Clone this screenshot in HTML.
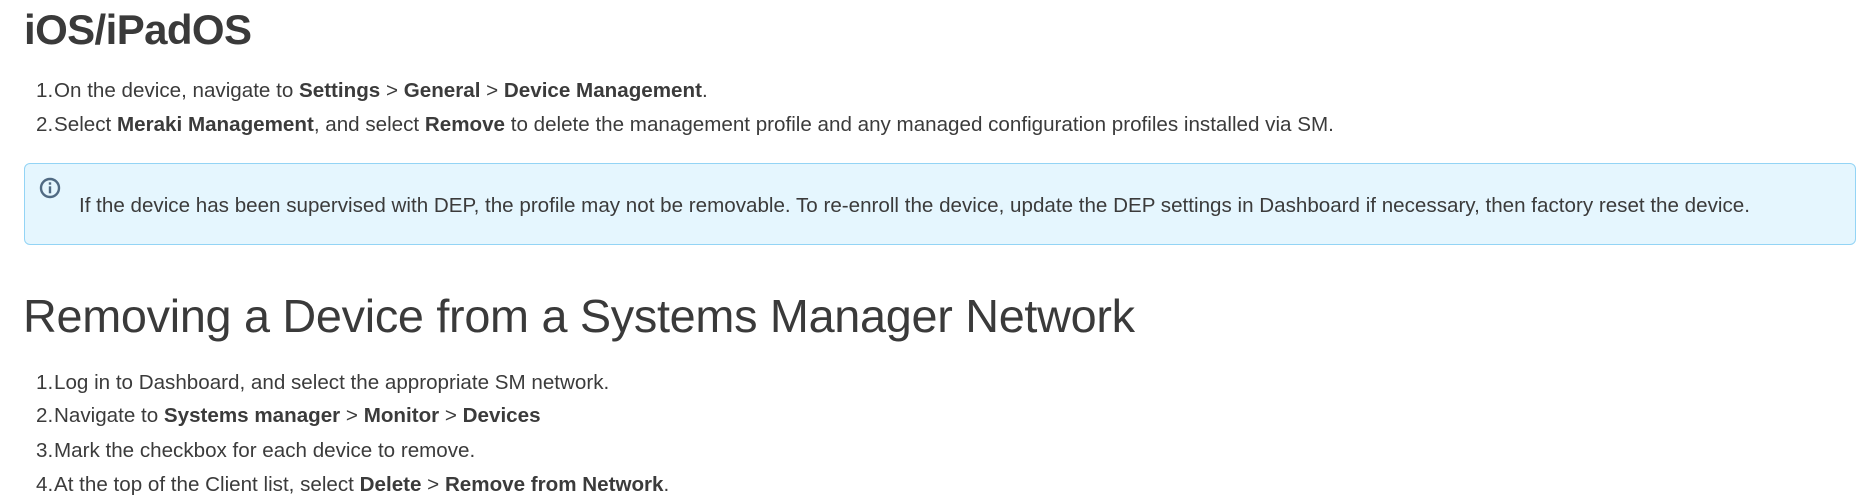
<!DOCTYPE html>
<html><head><style>
body{margin:0;width:1864px;height:502px;background:#fff;color:#3b3b3b;font-family:"Liberation Sans",sans-serif;position:relative;overflow:hidden}
.a{position:absolute;white-space:nowrap}
h1{position:absolute;left:24px;top:6px;margin:0;font-size:42px;font-weight:bold;color:#3a3a3a;letter-spacing:-0.6px}
h2{position:absolute;left:23px;top:289px;margin:0;font-size:46.8px;font-weight:normal;color:#3a3a3a;letter-spacing:-0.3px}
.li{position:absolute;left:36px;font-size:20.6px;white-space:nowrap;line-height:22px}
.li .n{display:inline-block;width:18px}
.box{position:absolute;left:24px;top:163px;width:1830px;height:80px;background:#e5f6fe;border:1px solid #93d4f5;border-radius:6px}
</style></head><body>
<h1>iOS/iPadOS</h1>
<div class="li" style="top:80px"><span class="n">1.</span>On the device, navigate to <b>Settings</b> &gt; <b>General</b> &gt; <b>Device Management</b>.</div>
<div class="li" style="top:114px"><span class="n">2.</span>Select <b>Meraki Management</b>, and select <b>Remove</b> to delete the management profile and any managed configuration profiles installed via SM.</div>
<div class="box"></div>
<svg class="a" style="left:39px;top:177px" width="22" height="22" viewBox="0 0 22 22"><circle cx="11" cy="11" r="9" fill="none" stroke="#506a83" stroke-width="2.4"/><rect x="9.8" y="9.3" width="2.4" height="7" fill="#506a83"/><rect x="9.8" y="5.3" width="2.4" height="2.4" fill="#506a83"/></svg>
<div class="li" style="left:79px;top:195px">If the device has been supervised with DEP, the profile may not be removable. To re-enroll the device, update the DEP settings in Dashboard if necessary, then factory reset the device.</div>
<h2>Removing a Device from a Systems Manager Network</h2>
<div class="li" style="top:372px"><span class="n">1.</span>Log in to Dashboard, and select the appropriate SM network.</div>
<div class="li" style="top:405px"><span class="n">2.</span>Navigate to <b>Systems manager</b> &gt; <b>Monitor</b> &gt; <b>Devices</b></div>
<div class="li" style="top:440px"><span class="n">3.</span>Mark the checkbox for each device to remove.</div>
<div class="li" style="top:474px"><span class="n">4.</span>At the top of the Client list, select <b>Delete</b> &gt; <b>Remove from Network</b>.</div>
</body></html>
